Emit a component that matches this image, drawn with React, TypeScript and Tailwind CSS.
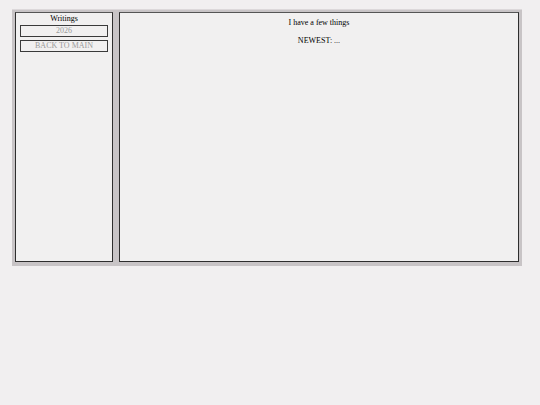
export default function App() {
  return (
    <div className="min-h-[405px] w-[540px] bg-[#f1eff0] pl-3 pt-[9px] font-['Liberation_Serif',serif] text-[8px] text-black">
      <div className="flex h-[257px] w-[510px] gap-[6px] border-t border-t-[#dcd8da] bg-[#c8c4c6] px-[3px] pb-[4px] pt-[2px]">
        <aside className="flex w-[98px] flex-col items-center border-[1.5px] border-[#2e2e2e] border-t-[#555] bg-[#f1f0f0] px-[4px]">
          <div className="leading-[11px]">Writings</div>
          <button className="mt-[1px] h-[12px] w-full border-[1.5px] border-[#3a3a3a] bg-[#f1f0f0] leading-[8px] text-[#9a9a9a]">
            2026
          </button>
          <button className="mt-[3px] h-[12px] w-full border-[1.5px] border-[#3a3a3a] bg-[#f1f0f0] leading-[8px] text-[#9a9a9a]">
            BACK TO MAIN
          </button>
        </aside>
        <main className="flex flex-1 flex-col items-center border-[1.5px] border-[#2e2e2e] border-t-[#555] bg-[#f1f0f0] pt-[4px]">
          <p className="leading-[11px]">I have a few things</p>
          <p className="mt-[7px] leading-[11px]">NEWEST: ...</p>
        </main>
      </div>
    </div>
  );
}
